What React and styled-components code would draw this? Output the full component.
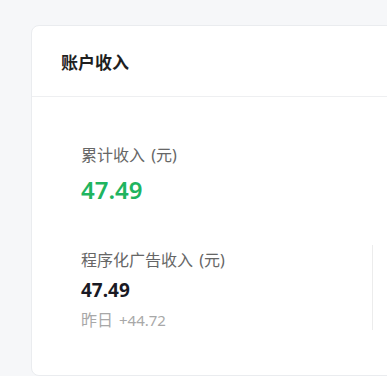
import React from "react";
import styled, { createGlobalStyle } from "styled-components";

const GlobalStyle = createGlobalStyle`
    html, body {
        margin: 0;
        padding: 0;
        background: #f6f7f9;
        overflow: hidden;
    }
    body {
        font-family: "Noto Sans", "Noto Sans CJK SC", sans-serif;
    }
`

const stats = [
    { label: "程序化广告收入 (元)", value: "47.49", yesterday: "+44.72" },
]

const App = () => {
    return (
        <Page>
            <GlobalStyle />
            <Card>
                <Header>
                    <Title>账户收入</Title>
                </Header>
                <Body>
                    <Label>累计收入 (元)</Label>
                    <Total>47.49</Total>
                    <StatRow>
                        {stats.map((s) => (
                            <Stat key={s.label}>
                                <Label>{s.label}</Label>
                                <Value>{s.value}</Value>
                                <Yesterday>
                                    昨日<span>{s.yesterday}</span>
                                </Yesterday>
                            </Stat>
                        ))}
                    </StatRow>
                </Body>
            </Card>
        </Page>
    )
}

const Page = styled.div`
    padding: 25px 0 0 31px;
    height: 376px;
    box-sizing: border-box;
`

const Card = styled.div`
    width: 700px;
    height: 351px;
    box-sizing: border-box;
    background: #ffffff;
    border: 1px solid #eaecef;
    border-radius: 8px;
`

const Header = styled.div`
    height: 71px;
    box-sizing: border-box;
    padding: 0 29px;
    display: flex;
    align-items: center;
    border-bottom: 1px solid #eeeff1;
`

const Title = styled.h2`
    margin: 0;
    font-size: 17px;
    font-weight: 700;
    color: #1f1f1f;
`

const Body = styled.div`
    padding: 47px 49px 0;
`

const Label = styled.div`
    font-size: 16px;
    line-height: 22px;
    color: #666666;
    word-spacing: 2px;
`

const Total = styled.div`
    margin-top: 8px;
    font-size: 24px;
    line-height: 32px;
    font-weight: 600;
    color: #20b45f;
`

const StatRow = styled.div`
    display: flex;
    margin-top: 39px;
`

const Stat = styled.div`
    width: 292px;
    box-sizing: border-box;
    padding-top: 4px;
    border-right: 1px solid #ececec;
`

const Value = styled.div`
    margin-top: 5px;
    font-size: 19px;
    line-height: 28px;
    font-weight: 700;
    color: #1a1a24;
`

const Yesterday = styled.div`
    margin-top: 6px;
    font-size: 16px;
    line-height: 20px;
    color: #a8a8a8;

    span {
        margin-left: 6px;
        font-size: 15px;
    }
`

export default App
